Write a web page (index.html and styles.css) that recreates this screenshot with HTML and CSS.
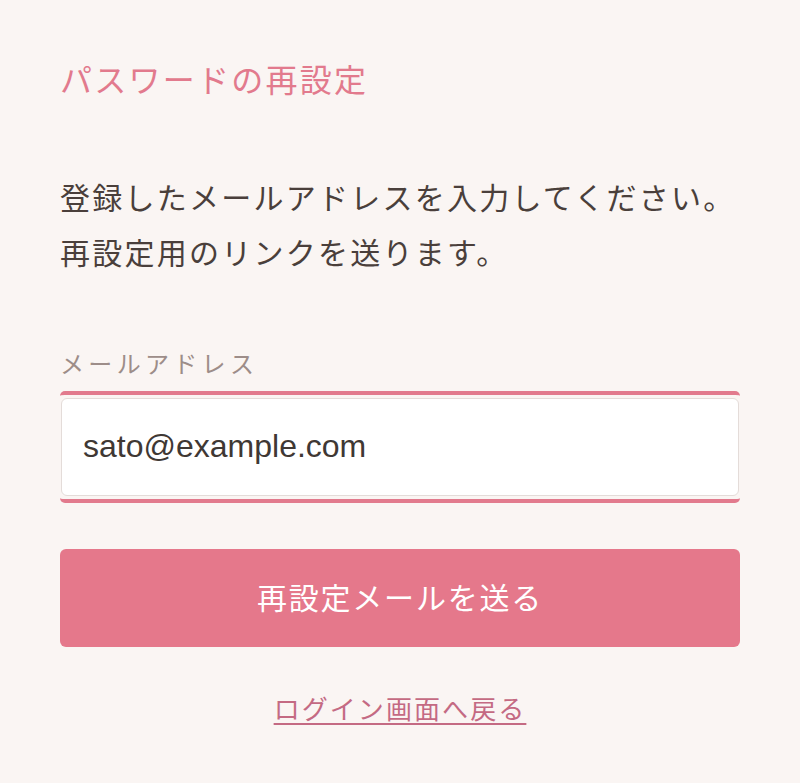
FILE: index.html
```html
<!DOCTYPE html>
<html lang="ja">

<head>
    <meta charset="UTF-8">
    <meta name="viewport" content="width=device-width, initial-scale=1.0">
    <title>パスワードの再設定</title>
    <link rel="stylesheet" href="styles.css">
</head>

<body>
    <div class="reset">
        <h1 class="reset-title">パスワードの再設定</h1>

        <p class="reset-lead">登録したメールアドレスを入力してください。<br>再設定用のリンクを送ります。</p>

        <form class="reset-form">
            <label class="field-label" for="email">メールアドレス</label>
            <div class="field-ring">
                <input class="field-input" id="email" type="email" value="sato@example.com">
            </div>

            <button class="submit" type="button">再設定メールを送る</button>
        </form>

        <div class="back">
            <a class="back-link" href="#">ログイン画面へ戻る</a>
        </div>
    </div>
</body>

</html>
```

FILE: styles.css
```css
/* Page base */
body {
    margin: 0;
    background-color: #faf5f3;
    color: #4a3f3b;
    font-family: "Noto Sans CJK JP", "Noto Sans", sans-serif;
}

.reset {
    padding: 54px 60px 0;
}

/* Title */
.reset-title {
    margin: 0;
    font-size: 32px;
    font-weight: 400;
    line-height: 48px;
    letter-spacing: 0.07em;
    color: #e27a8d;
}

/* Description text */
.reset-lead {
    margin: 67px 0 0;
    font-size: 30px;
    line-height: 55px;
    letter-spacing: 0.075em;
}

.reset-form {
    display: flex;
    flex-direction: column;
    margin-top: 66px;
}

.field-label {
    font-size: 24px;
    line-height: 36px;
    letter-spacing: 0.18em;
    color: #9d8d89;
}

/* Pink ring around the focused input */
.field-ring {
    margin-top: 10px;
    padding: 3px 1px;
    border-top: 4px solid #e27a8d;
    border-bottom: 4px solid #e27a8d;
    border-radius: 5px;
}

.field-input {
    display: block;
    box-sizing: border-box;
    width: 100%;
    height: 98px;
    padding: 0 21px 1px;
    border: 1px solid #e4dcd9;
    border-radius: 6px;
    background-color: #fff;
    color: #3f3834;
    font-family: "Liberation Sans", Arial, sans-serif;
    font-size: 32px;
    outline: none;
}

/* Submit button */
.submit {
    margin-top: 46px;
    height: 98px;
    padding-bottom: 5px;
    border: none;
    border-radius: 6px;
    background-color: #e5788b;
    color: #fff;
    font-family: inherit;
    font-size: 30px;
    letter-spacing: 0.06em;
    cursor: pointer;
}

.back {
    margin-top: 41px;
    text-align: center;
    line-height: 40px;
}

.back-link {
    font-size: 26px;
    letter-spacing: 0.08em;
    color: #c46a83;
    text-decoration: underline;
    text-underline-offset: 4px;
}
```
